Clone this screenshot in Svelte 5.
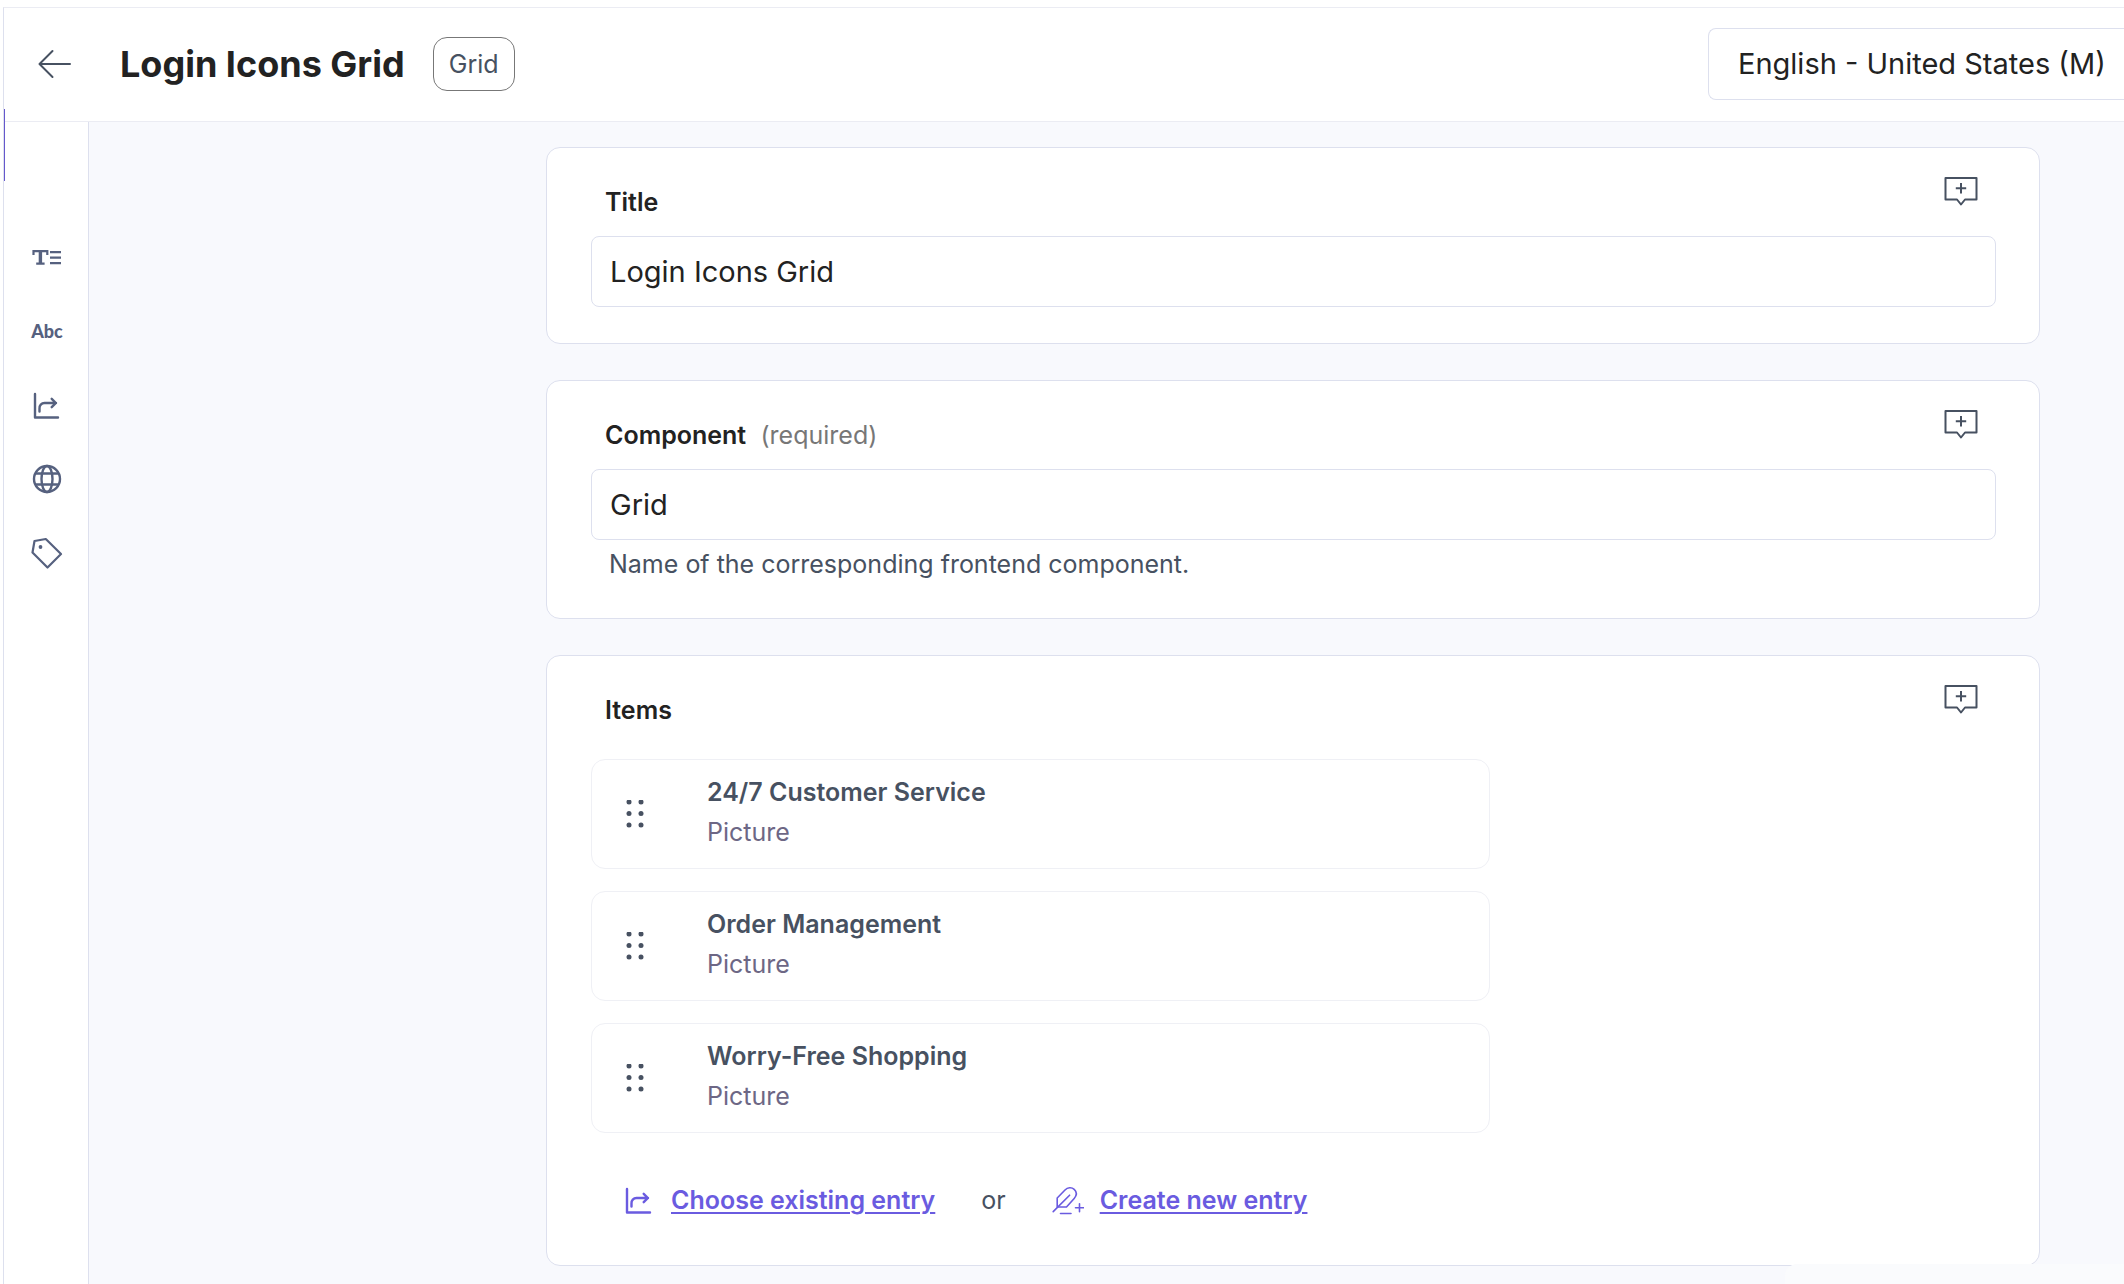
<!--
  Entry editor
  Header with entry title and locale picker, icon rail and field cards
-->
<script lang="ts">
  let title = "Login Icons Grid";
  let component = "Grid";
  let locale = "en-US";

  const entries = [
    { name: "24/7 Customer Service", type: "Picture" },
    { name: "Order Management", type: "Picture" },
    { name: "Worry-Free Shopping", type: "Picture" },
  ];
</script>

{#snippet linkIcon()}
  <svg class="icon" viewBox="0 0 32 32" fill="none" stroke="currentColor" stroke-width="2.4" stroke-linecap="round" stroke-linejoin="round" aria-hidden="true">
    <path d="M4 5v23.500h23" />
    <path d="M8.500 22.500v-3a5 5 0 0 1 5-5.500h11.500M20.700 9.800l4.200 4.200-4.200 4.200" />
  </svg>
{/snippet}

{#snippet commentButton(field: string)}
  <button type="button" class="comment" aria-label="Add comment to {field}">
    <svg viewBox="0 0 34 30" fill="none" stroke="currentColor" stroke-width="2" stroke-linejoin="round" aria-hidden="true">
      <path d="M1.500 2h31v21.500h-11.500l-4 5-4-5H1.500z" />
      <path d="M17 7v10.500M11.800 12.200h10.400" />
    </svg>
  </button>
{/snippet}

<div class="editor">
  <header class="header">
    <button type="button" class="back" aria-label="Back">
      <svg viewBox="0 0 34 30" fill="none" stroke="currentColor" stroke-width="2" stroke-linecap="round" stroke-linejoin="round" aria-hidden="true">
        <path d="M32 15H2M14.500 2L1.500 15l13 13" />
      </svg>
    </button>
    <h1 class="heading">{title}</h1>
    <span class="badge">Grid</span>
    <select class="locale" aria-label="Locale" bind:value={locale}>
      <option value="en-US">English - United States (M)</option>
    </select>
  </header>

  <div class="body">
    <nav class="rail" aria-label="Entry tools">
      <button type="button" aria-label="Fields">
        <svg class="icon" viewBox="0 0 32 32" fill="none" stroke="currentColor" stroke-width="2.200" aria-hidden="true">
          <path d="M2.500 14V10.200h13.800V14M5.200 22.600h8.400" />
          <path stroke-width="3.400" d="M9.400 9.500v13" />
          <path d="M19 11.200h11M19 16.700h11M19 22.200h11" />
        </svg>
      </button>
      <button type="button" class="abc">Abc</button>
      <button type="button" aria-label="References">{@render linkIcon()}</button>
      <button type="button" aria-label="Locales">
        <svg class="icon" viewBox="0 0 32 32" fill="none" stroke="currentColor" stroke-width="2.400" aria-hidden="true">
          <circle cx="16" cy="16" r="13" />
          <ellipse cx="16" cy="16" rx="5.500" ry="13" />
          <path d="M4.500 10.500h23M4.500 21.500h23" />
        </svg>
      </button>
      <button type="button" aria-label="Tags">
        <svg class="icon" viewBox="0 0 32 32" fill="none" stroke="currentColor" stroke-width="2.200" stroke-linejoin="round" aria-hidden="true">
          <path d="M3.500 4L14.800 2 30 17 16.500 30.500 1.500 15.500z" />
          <circle cx="9.500" cy="10" r="1.900" fill="currentColor" stroke="none" />
        </svg>
      </button>
    </nav>

    <main class="content">
      <section class="card">
        <div class="card-head">
          <label for="title">Title</label>
          {@render commentButton("Title")}
        </div>
        <input id="title" type="text" bind:value={title} />
      </section>

      <section class="card">
        <div class="card-head">
          <label for="component">Component <span class="required">(required)</span></label>
          {@render commentButton("Component")}
        </div>
        <input id="component" type="text" bind:value={component} aria-describedby="component-hint" />
        <p class="hint" id="component-hint">Name of the corresponding frontend component.</p>
      </section>

      <section class="card">
        <div class="card-head">
          <h2>Items</h2>
          {@render commentButton("Items")}
        </div>
        <ul class="entries">
          {#each entries as entry}
            <li class="entry">
              <button type="button" class="handle" aria-label="Reorder {entry.name}">
                <svg viewBox="0 0 18 28" fill="currentColor" aria-hidden="true">
                  {#each [2, 13.5, 25] as y}
                    <circle cx="3" cy={y} r="2.500" />
                    <circle cx="15" cy={y} r="2.500" />
                  {/each}
                </svg>
              </button>
              <div class="entry-text">
                <h3>{entry.name}</h3>
                <p>{entry.type}</p>
              </div>
            </li>
          {/each}
        </ul>
        <div class="actions">
          {@render linkIcon()}
          <a href="#choose">Choose existing entry</a>
          <span class="or">or</span>
          <svg class="icon" viewBox="0 0 32 32" fill="none" stroke="currentColor" stroke-width="1.600" stroke-linecap="round" stroke-linejoin="round" aria-hidden="true">
            <path d="M1.200 27.600L17.600 11.200" />
            <path d="M5.200 23V14L13 6c2.600-2.600 6.600-3 9.200-.6 2.600 2.500 2.600 6 0 9L14.500 23z" />
            <path d="M8.500 29.500h10.500M27.500 19.800v8M23.500 23.800h8" />
          </svg>
          <a href="#create">Create new entry</a>
        </div>
      </section>
    </main>
  </div>
  <div class="toast"></div>
</div>

<style>
  :global(body) {
    margin: 0;
    background: #fff;
  }

  .editor {
    --ink: #222;
    --slate: #475161;
    --rail: #56617f;
    --line: #dde0ee;
    --accent: #6a5be0;

    position: relative;
    display: flex;
    flex-direction: column;
    box-sizing: border-box;
    min-height: 100vh;
    padding: 7px 0 0 3px;
    overflow: hidden;
    color: var(--ink);
    font-family: Inter, "Liberation Sans", sans-serif;
    font-size: 25px;
    line-height: 32px;
  }

  .editor * {
    box-sizing: border-box;
  }

  button {
    display: flex;
    align-items: center;
    justify-content: center;
    padding: 0;
    border: 0;
    background: none;
    color: inherit;
    font: inherit;
    cursor: pointer;
  }

  h1,
  h2,
  h3,
  p,
  ul {
    margin: 0;
    padding: 0;
    font-size: inherit;
    list-style: none;
  }

  .icon {
    flex: none;
    width: 32px;
    height: 32px;
  }

  .header {
    display: flex;
    align-items: center;
    height: 115px;
    padding: 0 0 2px 34px;
    border: 1px solid #ebecf3;
    border-left-color: var(--line);
    border-right: 0;
  }

  .back {
    width: 34px;
    height: 30px;
    color: var(--slate);
  }

  .back svg,
  .comment svg {
    width: 34px;
    height: 30px;
  }

  .heading {
    margin: 0 28px 0 48px;
    font-size: 36px;
    font-weight: 700;
    line-height: 44px;
  }

  .badge {
    padding: 10px 15px;
    border: 1px solid #777;
    border-radius: 14px;
    color: var(--slate);
  }

  .locale {
    width: 416px;
    height: 72px;
    margin-left: auto;
    padding: 0 0 0 29px;
    border: 1px solid var(--line);
    border-right: 0;
    border-radius: 8px 0 0 8px;
    appearance: none;
    background: #fff;
    color: var(--ink);
    font: inherit;
    font-size: 29px;
  }

  .body {
    display: flex;
    flex: 1;
  }

  .rail {
    display: flex;
    flex: none;
    flex-direction: column;
    gap: 42px;
    width: 86px;
    padding: 119px 0 0 2px;
    border: 1px solid var(--line);
    border-width: 0 1px;
    color: var(--rail);
  }

  .abc {
    font-family: Lato, sans-serif;
    font-size: 18px;
    font-weight: 900;
  }

  .content {
    display: flex;
    flex: 1;
    flex-direction: column;
    gap: 36px;
    padding: 25px 84px 18px 457px;
    background: #f8f9fd;
  }

  .card {
    padding: 28px 43px 36px 44px;
    border: 1px solid var(--line);
    border-radius: 14px;
    background: #fff;
  }

  .card-head {
    display: flex;
    align-items: flex-start;
    justify-content: space-between;
    height: 60px;
    padding: 0 18px 0 14px;
  }

  label,
  h2 {
    padding-top: 10px;
    font-weight: 600;
  }

  .required {
    margin-left: 8px;
    color: #777;
    font-weight: 400;
  }

  .comment {
    color: var(--slate);
  }

  input {
    display: block;
    width: 100%;
    height: 71px;
    padding: 0 18px;
    border: 1px solid var(--line);
    border-radius: 8px;
    background: #fff;
    color: var(--ink);
    font: inherit;
    font-size: 29px;
  }

  .hint {
    padding: 8px 18px 2px;
    color: var(--slate);
  }

  .entries {
    display: flex;
    flex-direction: column;
    gap: 22px;
    width: 64%;
    padding-top: 15px;
  }

  .entry {
    display: flex;
    align-items: center;
    gap: 63px;
    height: 110px;
    padding: 0 34px;
    border: 1px solid #eff0f5;
    border-radius: 14px;
    color: var(--slate);
    line-height: 40px;
  }

  .entry-text {
    padding-bottom: 4px;
  }

  .entry h3 {
    font-weight: 600;
  }

  .entry p {
    color: #6d6785;
  }

  .handle {
    cursor: grab;
  }

  .handle svg {
    width: 18px;
    height: 28px;
  }

  .actions {
    display: flex;
    align-items: center;
    gap: 16px;
    padding: 51px 0 13px 32px;
    color: var(--accent);
  }

  .actions a {
    color: inherit;
    font-weight: 600;
    text-decoration-thickness: 2px;
    text-underline-offset: 3px;
  }

  .or {
    padding: 0 30px;
    color: var(--slate);
  }

  .toast {
    position: absolute;
    right: 0;
    bottom: 0;
    width: 339px;
    height: 20px;
    border-radius: 12px 0 0 0;
    background: #fafbfd;
  }

  /* Marker of the active panel on the left edge */
  .editor::before {
    position: absolute;
    top: 109px;
    left: 4px;
    width: 1px;
    height: 72px;
    background: #6558cc;
    content: "";
  }
</style>
